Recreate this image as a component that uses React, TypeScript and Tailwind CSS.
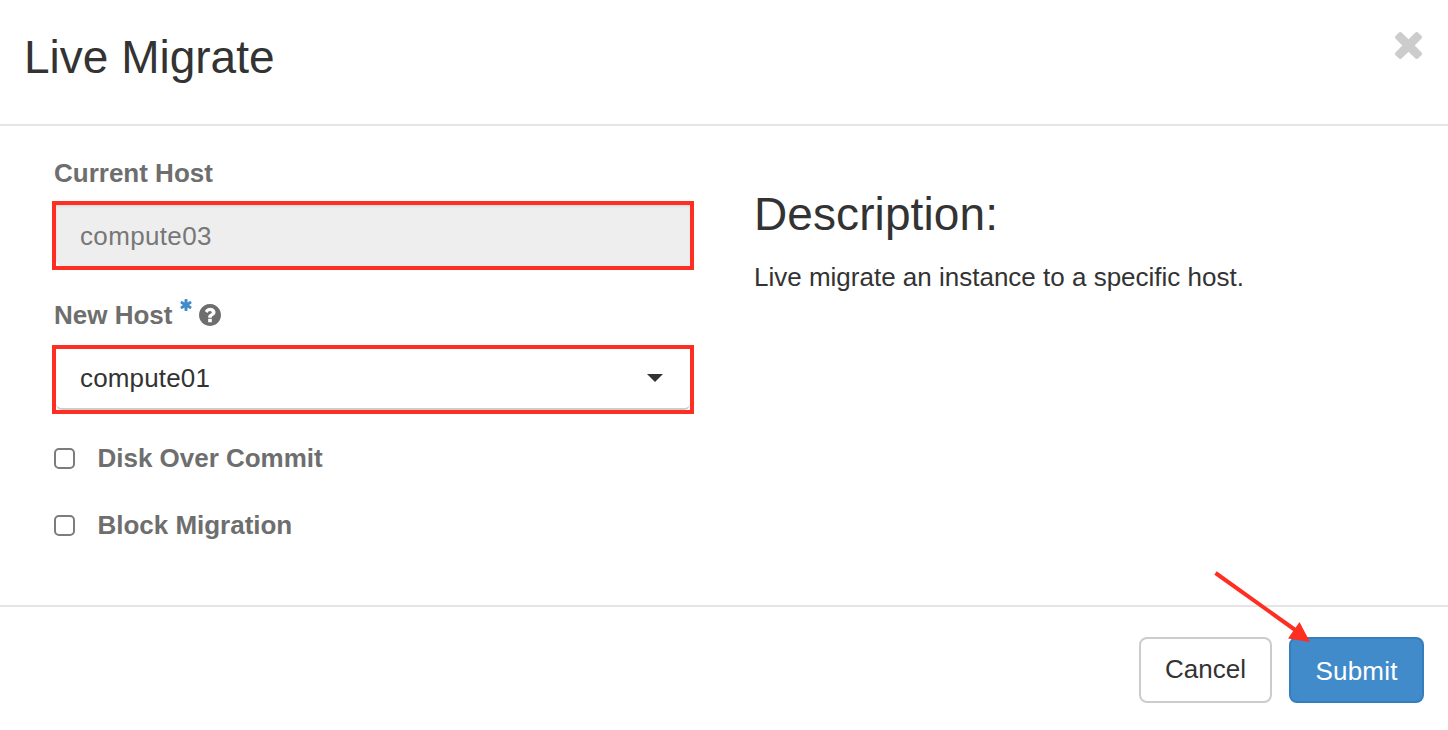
import { ReactNode, useState } from 'react'

interface IconProps {
  className?: string
}

function TimesIcon({ className }: IconProps) {
  return (
    <svg viewBox="302 366 1188 1188" fill="currentColor" className={className}>
      <path d="M1490 1322q0 40-28 68l-136 136q-28 28-68 28t-68-28l-294-294-294 294q-28 28-68 28t-68-28l-136-136q-28-28-28-68t28-68l294-294-294-294q-28-28-28-68t28-68l136-136q28-28 68-28t68 28l294 294 294-294q28-28 68-28t68 28l136 136q28 28 28 68t-28 68l-294 294 294 294q28 28 28 68z" />
    </svg>
  )
}

function AsteriskIcon({ className }: IconProps) {
  return (
    <svg viewBox="128 128 1536 1536" fill="currentColor" className={className}>
      <path d="M1546 1050q46 26 59.5 77.5t-12.5 97.5l-64 110q-26 46-77.5 59.5t-97.5-12.5l-266-153v307q0 52-38 90t-90 38h-128q-52 0-90-38t-38-90v-307l-266 153q-46 26-97.5 12.5t-77.5-59.5l-64-110q-26-46-12.5-97.5t59.5-77.5l266-154-266-154q-46-26-59.5-77.5t12.5-97.5l64-110q26-46 77.5-59.5t97.5 12.5l266 153v-307q0-52 38-90t90-38h128q52 0 90 38t38 90v307l266-153q46-26 97.5-12.5t77.5 59.5l64 110q26 46 12.5 97.5t-59.5 77.5l-266 154z" />
    </svg>
  )
}

function QuestionIcon({ className }: IconProps) {
  return (
    <svg viewBox="128 128 1536 1536" fill="currentColor" className={className}>
      <path d="M1024 1376v-192q0-14-9-23t-23-9h-192q-14 0-23 9t-9 23v192q0 14 9 23t23 9h192q14 0 23-9t9-23zm256-672q0-88-55.5-163t-138.5-116-170-41q-243 0-371 213-15 24 8 42l132 100q7 6 19 6 16 0 25-12 53-68 86-92 34-24 86-24 48 0 85.5 26t37.5 59q0 38-20 61t-68 45q-63 28-115.5 86.5t-52.5 125.5v36q0 14 9 23t23 9h192q14 0 23-9t9-23q0-19 21.5-49.5t54.5-49.5q32-18 49-28.5t46-35 44.5-48 28-60.5 12.5-81zm384 192q0 209-103 385.5t-279.5 279.5-385.5 103-385.5-103-279.5-279.5-103-385.5 103-385.5 279.5-279.5 385.5-103 385.5 103 279.5 279.5 103 385.5z" />
    </svg>
  )
}

// Red frame drawn around the fields to look at
function Highlight({ children }: { children: ReactNode }) {
  return <div className="h-[69px] w-[642px] border-4 border-[#ff2e22] bg-white">{children}</div>
}

interface CheckboxFieldProps {
  label: string
  checked: boolean
  onChange: (checked: boolean) => void
}

function CheckboxField({ label, checked, onChange }: CheckboxFieldProps) {
  return (
    <label className="flex h-[30px] items-center pl-[2px]">
      <input
        type="checkbox"
        checked={checked}
        onChange={(e) => onChange(e.target.checked)}
        className="size-[21px] appearance-none rounded-[5px] border-2 border-[#7c7c7c] bg-white checked:bg-[#428bca]"
      />
      <span className="ml-[22.5px] font-bold tracking-[-0.02px] text-[#6e6e6e]">{label}</span>
    </label>
  )
}

export default function App() {
  const [diskOverCommit, setDiskOverCommit] = useState(false)
  const [blockMigration, setBlockMigration] = useState(false)

  return (
    <div className="flex h-[730px] w-[1448px] flex-col overflow-hidden bg-white font-['Liberation_Sans',Arial,sans-serif] text-[26px] leading-[30px] text-[#333]">
      <header className="flex h-[126px] shrink-0 items-start justify-between border-b-2 border-[#e5e5e5] pr-[26px] pl-6">
        <h3 className="mt-[32px] text-[46px] leading-[50px]">Live Migrate</h3>
        <button type="button" aria-label="Close" className="mt-8 text-[#ccc]">
          <TimesIcon className="size-[27px]" />
        </button>
      </header>

      <main className="flex h-[481px] shrink-0 border-b-2 border-[#e5e5e5] pl-[52px]">
        <div className="w-[702px] pt-8">
          <div className="pl-[2px] font-bold text-[#6e6e6e]">Current Host</div>
          <div className="mt-[13px]">
            <Highlight>
              <div className="flex h-full items-center rounded-bl-[6px] bg-[#eee] pl-6 tracking-[0.35px] text-[#777] shadow-[inset_0_2px_2px_rgba(0,0,0,0.06)]">
                compute03
              </div>
            </Highlight>
          </div>

          <div className="mt-[30px] flex h-[30px] pl-[2px] text-[#6e6e6e]">
            <span className="font-bold">New Host</span>
            <AsteriskIcon className="mt-[-1px] ml-2 size-3 text-[#428bca]" />
            <QuestionIcon className="mt-1 ml-[7px] size-[22px]" />
          </div>
          <div className="mt-[15px]">
            <Highlight>
              <div className="flex h-[61px] items-center justify-between rounded-b-[6px] border-b-2 border-[#ccc] pr-[27px] pb-px pl-6">
                <span className="tracking-[0.15px]">compute01</span>
                <svg viewBox="0 0 16 8" className="h-2 w-4">
                  <path d="M0 0h16L8 8z" fill="#333" />
                </svg>
              </div>
            </Highlight>
          </div>

          <div className="mt-[29px] flex flex-col gap-[37px]">
            <CheckboxField label="Disk Over Commit" checked={diskOverCommit} onChange={setDiskOverCommit} />
            <CheckboxField label="Block Migration" checked={blockMigration} onChange={setBlockMigration} />
          </div>
        </div>

        <div className="pt-[63px]">
          <h3 className="text-[46px] leading-[50px] tracking-[0.1px]">Description:</h3>
          <p className="mt-[23px]">Live migrate an instance to a specific host.</p>
        </div>
      </main>

      <footer className="relative flex justify-end gap-[17px] pt-[30px] pr-6">
        <button type="button" className="h-[66px] w-[133px] rounded-lg border-2 border-[#ccc] bg-white pb-[2px]">
          Cancel
        </button>
        <button type="button" className="h-[66px] w-[135px] rounded-lg border-2 border-[#357ebd] bg-[#428bca] pt-[2px] tracking-[0.2px] text-white">
          Submit
        </button>
        <svg viewBox="0 0 100 76" className="pointer-events-none absolute top-[-37px] right-[138px] h-[76px] w-[100px]">
          <path d="M5.5 3L86 60.5" stroke="#ff2e22" strokeWidth="4" />
          <path d="M100 72L78 68.5L89.5 52z" fill="#ff2e22" />
        </svg>
      </footer>
    </div>
  )
}
